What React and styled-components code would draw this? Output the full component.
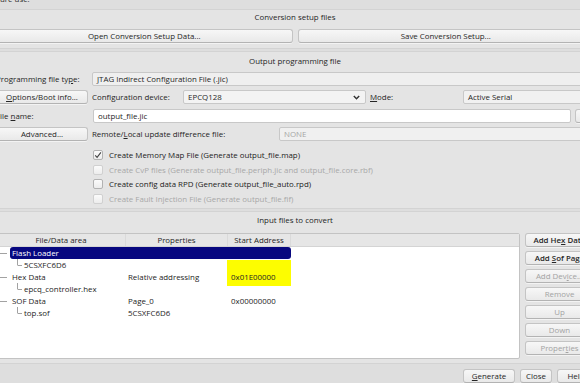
import React from "react";
import styled, { createGlobalStyle } from "styled-components";

const GlobalStyle = createGlobalStyle`
  *, *::before, *::after { box-sizing: border-box; }
  html, body { margin: 0; padding: 0; background: #dedede; overflow: hidden; }
  body {
    font-family: "Open Sans", "DejaVu Sans", sans-serif;
    font-size: 7.9px;
    color: #252525;
  }
  u { text-decoration-thickness: 1px; text-underline-offset: 1px; }
`;

const Viewport = styled.div`
  width: 580px;
  height: 383px;
  overflow: hidden;
`;

// the dialog is wider than the shot, so it sits a few pixels left of the edge
const Dialog = styled.div`
  width: 610px;
  margin-left: -10px;
  padding: 0 5px;
  display: flex;
  flex-direction: column;
`;

const Note = styled.div`
  height: 10px;
  margin-top: -6px;
  line-height: 10px;
  padding-left: 5px;
  color: #2d2d2d;
`;

const Group = styled.section`
  margin-top: ${(p) => p.$top}px;
  padding: ${(p) => p.$pad};
  background: #e4e4e4;
  border: 1px solid #d3d3d3;
  border-radius: 2px;
  display: flex;
  flex-direction: column;
`;

const GroupTitle = styled.div`
  height: 10px;
  line-height: 10px;
  text-align: center;
  margin-bottom: ${(p) => p.$after}px;
`;

const Button = styled.button`
  font: inherit;
  font-weight: ${(p) => (p.$strong ? 600 : 400)};
  height: 14px;
  width: ${(p) => (p.$w ? `${p.$w}px` : "auto")};
  flex: ${(p) => (p.$grow ? 1 : "none")};
  padding: 0 3px;
  color: ${(p) => (p.disabled ? "#a3a3a3" : "#262626")};
  background: linear-gradient(#f7f7f7, #e9e9e9);
  border: 1px solid #c4c4c4;
  border-bottom-color: #b3b3b3;
  border-radius: 3px;
  box-shadow: 0 1px 0 rgba(255, 255, 255, 0.55);
  white-space: nowrap;
  overflow: hidden;
  display: block;
  text-align: center;
  line-height: 12px;
`;

const ButtonPair = styled.div`
  display: flex;
  gap: 5px;
`;

const FormRow = styled.div`
  display: flex;
  align-items: center;
  height: 14px;
  gap: ${(p) => p.$gap ?? 4}px;
  margin-top: ${(p) => p.$top}px;
`;

const Label = styled.div`
  width: ${(p) => p.$w}px;
  flex: none;
  padding-left: ${(p) => p.$pl || 0}px;
  white-space: nowrap;
  line-height: 14px;
`;

const Field = styled.div`
  height: 14px;
  width: ${(p) => (p.$w ? `${p.$w}px` : "auto")};
  flex: ${(p) => (p.$w ? "none" : 1)};
  margin-left: ${(p) => p.$ml || 0}px;
  display: flex;
  align-items: center;
  justify-content: space-between;
  padding: 0 5px 0 4px;
  background: ${(p) => p.$bg || "#f2f2f2"};
  color: ${(p) => p.$fg || "#262626"};
  border: 1px solid #c8c8c8;
  border-radius: 2px;
  white-space: nowrap;
  overflow: hidden;
`;

const Checks = styled.div`
  margin-top: 7px;
  padding-left: 97px;
  display: flex;
  flex-direction: column;
`;

const CheckRow = styled.label`
  height: 14.5px;
  display: flex;
  align-items: center;
  gap: 6px;
  color: ${(p) => (p.$off ? "#a8a8a8" : "#222")};
  white-space: nowrap;
`;

const Box = styled.span`
  width: 10px;
  height: 10px;
  flex: none;
  border: 1px solid ${(p) => (p.$off ? "#d0d0d0" : "#b2b2b2")};
  border-radius: 2px;
  background: linear-gradient(#fbfbfb, #ececec);
  display: flex;
  align-items: center;
  justify-content: center;
`;

const InputArea = styled.div`
  display: flex;
  gap: 5px;
`;

const Tree = styled.div`
  flex: 1;
  height: 126px;
  background: #fff;
  border: 1px solid #c3c3c3;
  border-radius: 2px;
  overflow: hidden;
`;

const TreeHead = styled.div`
  display: flex;
  height: 13px;
  background: #e6e6e6;
  border-bottom: 1px solid #d4d4d4;
`;

const HeadCell = styled.div`
  width: ${(p) => p.$w}px;
  flex: none;
  text-align: center;
  line-height: 12px;
  border-right: 1px solid #dadada;
`;

const Row = styled.div`
  display: flex;
  height: 12px;
  line-height: 12px;
`;

const RowBody = styled.div`
  display: flex;
  background: ${(p) => (p.$sel ? "#07077f" : "transparent")};
  color: ${(p) => (p.$sel ? "#fff" : "#242424")};
  border-radius: 3px;
`;

const Cell = styled.div`
  width: ${(p) => p.$w}px;
  flex: none;
  padding-left: ${(p) => p.$pl}px;
  white-space: nowrap;
`;

const Marker = styled.span`
  display: block;
  margin: -11px 0 -3px -1px;
  padding: 11px 0 3px 4px;
  background: #fdfd00;
  height: 26px;
`;

const SideButtons = styled.div`
  width: 69px;
  display: flex;
  flex-direction: column;
  gap: 4px;
`;

const Footer = styled.div`
  margin-top: 5px;
  display: flex;
  justify-content: flex-end;
  gap: 5px;
`;

const Chevron = () => (
  <svg width="7" height="5" viewBox="0 0 7 5">
    <polyline points="0.8,1 3.5,3.8 6.2,1" fill="none" stroke="#333" strokeWidth="1.4" />
  </svg>
);

const Tick = () => (
  <svg width="8" height="8" viewBox="0 0 8 8">
    <polyline points="1.2,4.3 3.1,6.3 6.9,1.4" fill="none" stroke="#444" strokeWidth="1.1" />
  </svg>
);

const Branch = ({ depth, last }) =>
  depth === 0 ? (
    <svg width="13" height="12" style={{ flex: "none" }}>
      <line x1="2.5" y1="0" x2="2.5" y2={last ? 6 : 12} stroke="#a2a2a2" />
      <line x1="2.5" y1="6.5" x2="10" y2="6.5" stroke="#a2a2a2" />
    </svg>
  ) : (
    <svg width="25" height="12" style={{ flex: "none" }}>
      {!last && <line x1="2.5" y1="0" x2="2.5" y2="12" stroke="#a2a2a2" />}
      <line x1="20.5" y1="0" x2="20.5" y2="6" stroke="#a2a2a2" />
      <line x1="20.5" y1="6.5" x2="25" y2="6.5" stroke="#a2a2a2" />
    </svg>
  );

const rows = [
  { depth: 0, name: "Flash Loader", sel: true },
  { depth: 1, name: "5CSXFC6D6" },
  { depth: 0, name: "Hex Data", prop: "Relative addressing", addr: "0x01E00000", mark: true },
  { depth: 1, name: "epcq_controller.hex" },
  { depth: 0, name: "SOF Data", prop: "Page_0", addr: "0x00000000", last: true },
  { depth: 1, name: "top.sof", prop: "5CSXFC6D6", last: true },
];

const checks = [
  { text: "Create Memory Map File (Generate output_file.map)", on: true },
  { text: "Create CvP files (Generate output_file.periph.jic and output_file.core.rbf)", off: true },
  { text: "Create config data RPD (Generate output_file_auto.rpd)" },
  { text: "Create Fault Injection File (Generate output_file.fif)", off: true },
];

export default function App() {
  return (
    <Viewport>
      <GlobalStyle />
      <Dialog>
        <Note>ure use.</Note>

        <Group $top={5} $pad="2px 0 5px">
          <GroupTitle $after={7}>Conversion setup files</GroupTitle>
          <ButtonPair>
            <Button $grow>Open Conversion Setup Data...</Button>
            <Button $grow>Save Conversion Setup...</Button>
          </ButtonPair>
        </Group>

        <Group $top={2} $pad="4px 0 2px">
          <GroupTitle $after={0}>Output programming file</GroupTitle>
          <FormRow $top={6}>
            <Label $w={92}>
              Programming file ty<u>p</u>e:
            </Label>
            <Field $bg="#efefef">JTAG Indirect Configuration File (.jic)</Field>
          </FormRow>
          <FormRow $top={4} $gap={0}>
            <Button $w={92}>
              <u>O</u>ptions/Boot info...
            </Button>
            <Label $w={95} $pl={4}>
              Confi<u>g</u>uration device:
            </Label>
            <Field $w={183} $bg="#f3f3f3">
              EPCQ128
              <Chevron />
            </Field>
            <Label $w={97} $pl={4}>
              <u>M</u>ode:
            </Label>
            <Field $bg="#f1f1f1">Active Serial</Field>
          </FormRow>
          <FormRow $top={5}>
            <Label $w={92}>
              File <u>n</u>ame:
            </Label>
            <Field $bg="#fff" $ml={1}>output_file.jic</Field>
            <Button $w={19}>...</Button>
          </FormRow>
          <FormRow $top={4} $gap={0}>
            <Button $w={92}>Advanced...</Button>
            <Label $w={191} $pl={4}>
              Remote/<u>L</u>ocal update difference file:
            </Label>
            <Field $bg="#f0f0f0" $fg="#a5a5a5">NONE</Field>
          </FormRow>
          <Checks>
            {checks.map((c) => (
              <CheckRow key={c.text} $off={c.off}>
                <Box $off={c.off}>{c.on && <Tick />}</Box>
                {c.text}
              </CheckRow>
            ))}
          </Checks>
        </Group>

        <Group $top={2} $pad="3px 0 4px">
          <GroupTitle $after={8}>Input files to convert</GroupTitle>
          <InputArea>
            <Tree>
              <TreeHead>
                <HeadCell $w={129}>File/Data area</HeadCell>
                <HeadCell $w={102}>Properties</HeadCell>
                <HeadCell $w={63}>Start Address</HeadCell>
              </TreeHead>
              {rows.map((r) => (
                <Row key={r.name}>
                  <Branch depth={r.depth} last={r.last} />
                  <RowBody $sel={r.sel}>
                    <Cell $w={r.depth === 0 ? 116 : 104} $pl={2}>
                      {r.name}
                    </Cell>
                    <Cell $w={102} $pl={2}>
                      {r.prop}
                    </Cell>
                    <Cell $w={63} $pl={r.mark ? 0 : 3}>
                      {r.mark ? <Marker>{r.addr}</Marker> : r.addr}
                    </Cell>
                  </RowBody>
                </Row>
              ))}
            </Tree>
            <SideButtons>
              <Button $strong>
                Add He<u>x</u> Data
              </Button>
              <Button $strong>
                Add <u>S</u>of Page
              </Button>
              <Button disabled>
                Add Dev<u>i</u>ce...
              </Button>
              <Button disabled>Remove</Button>
              <Button disabled>Up</Button>
              <Button disabled>Down</Button>
              <Button disabled>
                Proper<u>t</u>ies
              </Button>
            </SideButtons>
          </InputArea>
        </Group>

        <Footer>
          <Button $w={52}>
            <u>G</u>enerate
          </Button>
          <Button $w={32}>Close</Button>
          <Button $w={38}>Help</Button>
        </Footer>
      </Dialog>
    </Viewport>
  );
}
